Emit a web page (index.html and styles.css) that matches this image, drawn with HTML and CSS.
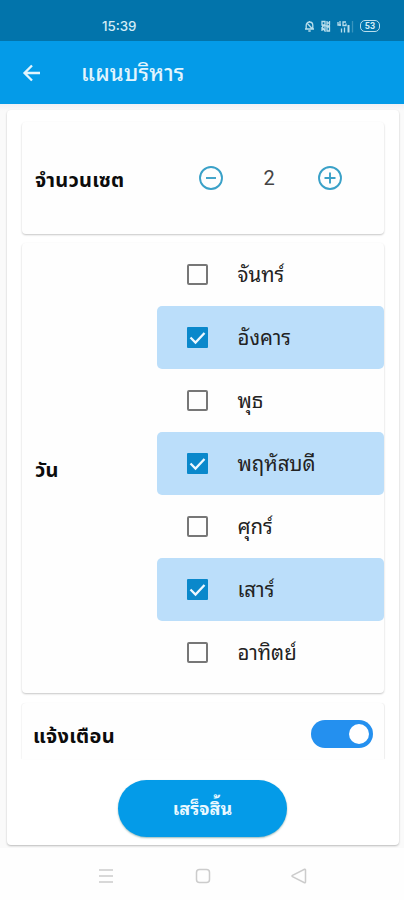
FILE: index.html
```html
<!DOCTYPE html>
<html lang="th">
<head>
<meta charset="utf-8">
<meta name="viewport" content="width=device-width, initial-scale=1">
<title>แผนบริหาร</title>
<link rel="stylesheet" href="styles.css">
</head>
<body>
<div class="status">
  <span class="time">15:39</span>
  <div class="status-icons">
    <svg width="11" height="12" viewBox="0 0 11 12"><path d="M2.2 8.5V5.3a3.3 3.3 0 0 1 6.6 0v3.2M1 9h9M4.3 11h2.400M5.500 1v1.500M3 3l5 5.500"/></svg>
    <svg width="10" height="12" viewBox="0 0 10 12"><path d="M1 1.500h3v3.500h-3zM6 1v4.500M8.500 1v4.500M6 3h2.500M1 7v4M1 7l3 4v-4M6 7h2.500v4h-2.500zM1 6h8"/></svg>
    <svg width="17" height="13" viewBox="0 0 17 13"><path d="M1 2v3h3M3 1v5M9 2h-3v3.500h3v-2M4.500 8.500v4M7.500 7.500v5"/><path class="bar" d="M11.500 5v7.500"/><path class="faint" d="M15.500 1v11.500"/></svg>
    <span class="battery">53</span>
  </div>
</div>
<header class="appbar">
  <svg class="back" width="20" height="20" viewBox="0 0 20 20"><path d="M18 10H3M10 2.500L2.500 10l7.500 7.500"/></svg>
  <h1 class="title">แผนบริหาร</h1>
</header>
<main class="content">
  <div class="sheet">
    <section class="card sets">
      <h2 class="label">จำนวนเซต</h2>
      <div class="stepper">
        <svg width="26" height="26" viewBox="0 0 26 26"><circle cx="13" cy="13" r="11"/><path d="M8 13h10"/></svg>
        <span class="count">2</span>
        <svg width="26" height="26" viewBox="0 0 26 26"><circle cx="13" cy="13" r="11"/><path d="M7.500 13h11M13 7.500v11"/></svg>
      </div>
    </section>
    <section class="card days">
      <h2 class="label">วัน</h2>
      <ul class="list">
        <li class="day"><i class="box"></i><span>จันทร์</span></li>
        <li class="day on"><i class="box"><svg width="21" height="21" viewBox="0 0 21 21"><path d="M3.500 10.500l5 5L17.500 6"/></svg></i><span>อังคาร</span></li>
        <li class="day"><i class="box"></i><span>พุธ</span></li>
        <li class="day on"><i class="box"><svg width="21" height="21" viewBox="0 0 21 21"><path d="M3.500 10.500l5 5L17.500 6"/></svg></i><span>พฤหัสบดี</span></li>
        <li class="day"><i class="box"></i><span>ศุกร์</span></li>
        <li class="day on"><i class="box"><svg width="21" height="21" viewBox="0 0 21 21"><path d="M3.500 10.500l5 5L17.500 6"/></svg></i><span>เสาร์</span></li>
        <li class="day"><i class="box"></i><span>อาทิตย์</span></li>
      </ul>
    </section>
    <section class="card notify">
      <h2 class="label">แจ้งเตือน</h2>
      <div class="switch"><div class="knob"></div></div>
    </section>
    <button class="done">เสร็จสิ้น</button>
  </div>
</main>
<nav class="nav">
  <svg width="16" height="16" viewBox="0 0 16 16"><path d="M1 2h14M1 8h14M1 14h14"/></svg>
  <svg width="16" height="16" viewBox="0 0 16 16"><rect x="1.500" y="1.500" width="13" height="13" rx="3"/></svg>
  <svg width="16" height="16" viewBox="0 0 16 16"><path d="M13.500 1.300Q14.500 1 14.500 2v12q0 1-1 .7L1.500 8.700q-1-.7 0-1.400z"/></svg>
</nav>
</body>
</html>
```
FILE: styles.css
```css
* { box-sizing: border-box; margin: 0; padding: 0; }
body {
  width: 404px;
  height: 900px;
  overflow: hidden;
  display: flex;
  flex-direction: column;
  background: #fff;
  color: #222;
  font-family: Roboto, "Noto Sans Thai Looped", Loma, Garuda, "Noto Sans", sans-serif;
}
svg { display: block; flex: none; fill: none; }
.status {
  height: 41px;
  flex: none;
  padding: 11px 24px 0 102px;
  display: flex;
  justify-content: space-between;
  align-items: flex-start;
  background: #0274ab;
  color: #d3ecf6;
}
.time { font: 500 13.3px/30px Inter, sans-serif; }
.status-icons { display: flex; align-items: center; gap: 6px; height: 30px; }
.status-icons svg { stroke: #b9deec; stroke-width: 1.3; }
.status-icons .bar { stroke-width: 2; }
.status-icons .faint { opacity: .3; }
.battery {
  width: 20px;
  height: 12px;
  border: 1.5px solid #b9deec;
  border-radius: 5px;
  font: 700 9px/10px Roboto, sans-serif;
  text-align: center;
}
.appbar {
  height: 63px;
  flex: none;
  padding: 0 22px;
  display: flex;
  align-items: center;
  gap: 39px;
  background: #049be8;
  color: #e3f5fd;
}
.back { stroke: #e3f5fd; stroke-width: 2.3; }
.title { font-size: 22px; line-height: 30px; font-weight: 500; letter-spacing: .2px; padding-top: 3px; }
.content {
  height: 744px;
  flex: none;
  padding: 6px 5px 0 7px;
  background: linear-gradient(#f0f0f5, #fafafa 7px);
}
.sheet {
  height: 735px;
  padding: 12px 15px 0;
  display: flex;
  flex-direction: column;
  background: #fff;
  border-radius: 4px;
  box-shadow: 0 1px 2px #bbb;
}
.card {
  flex: none;
  width: 361.500px;
  padding-left: 13px;
  display: flex;
  align-items: center;
  justify-content: space-between;
  background: #fefefe;
  border-radius: 4px;
  box-shadow: 0 1px 2px #c6c6c6;
}
.label {
  padding-top: 4px;
  font: 700 20px/30px Roboto, "Noto Sans Thai", "Noto Sans", sans-serif;
  letter-spacing: .3px;
  color: #0c0c0c;
}
.sets { height: 112px; padding-right: 41px; }
.stepper { display: flex; align-items: center; justify-content: space-between; width: 145px; }
.stepper svg { stroke: #3aa1c8; stroke-width: 1.9; }
.count { font-size: 20px; line-height: 26px; color: #444; padding-right: 2px; }
.days { height: 450px; margin-top: 9px; }
.list { list-style: none; width: 227px; height: 450px; }
.day {
  height: 63px;
  padding-left: 30px;
  display: flex;
  align-items: center;
  gap: 30px;
  border-radius: 5px;
  font-size: 20.4px;
  line-height: 30px;
}
.on { background: #bbdefa; }
.box { width: 21px; height: 21px; border: 2px solid #777; border-radius: 2px; }
.on .box { border: 0; border-radius: 1px; background: #0a88cb; }
.box svg { stroke: #edf8ff; stroke-width: 2.3; }
.notify { height: 56px; margin-top: 10px; padding: 5px 11px 0 11px; border-radius: 4px 4px 0 0; box-shadow: 1px 0 1px #eee, -1px 0 1px #f4f4f4; }
.switch { width: 62px; height: 28px; padding: 4px; border-radius: 14px; background: #2490ef; display: flex; justify-content: flex-end; }
.knob { width: 20px; height: 20px; border-radius: 50%; background: #fff; }
.done {
  width: 169px;
  height: 57px;
  margin: 21px 0 0 96px;
  flex: none;
  border: 0;
  border-radius: 29px;
  background: #049be8;
  box-shadow: 0 1px 2px #9bb;
  color: #eaf8ff;
  font: 700 18px/30px Roboto, "Noto Sans Thai Looped", Loma, Garuda, "Noto Sans", sans-serif;
}
.nav { flex: 1; padding: 3px 97px 0 98px; display: flex; align-items: center; justify-content: space-between; background: #fefefe; }
.nav svg { stroke: #ccc; stroke-width: 1.5; }
```
